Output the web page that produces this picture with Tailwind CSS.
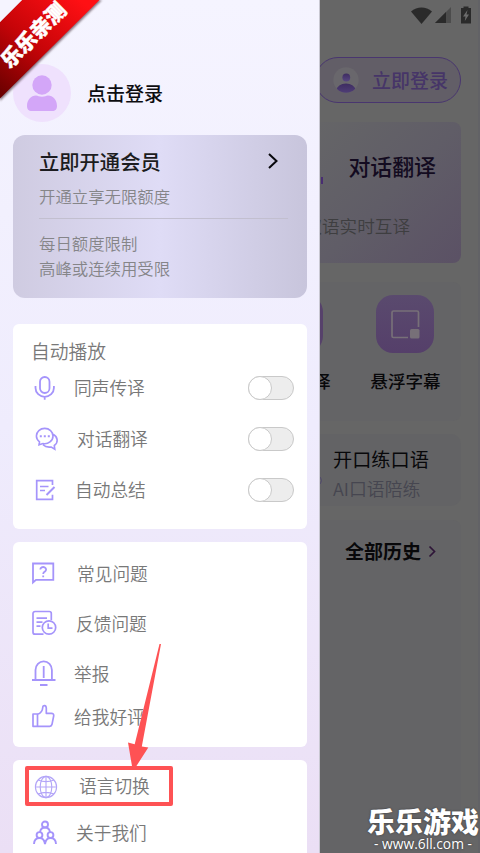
<!DOCTYPE html>
<html lang="zh-CN">
<head>
<meta charset="utf-8">
<title>设置</title>
<script src="https://cdn.jsdelivr.net/npm/@tailwindcss/browser@4"></script>
</head>
<body class="font-['Noto_Sans_CJK_SC',sans-serif]">
<div class="relative flex h-[853px] w-[480px] overflow-hidden bg-[#666666] whitespace-nowrap">

  <!-- drawer -->
  <aside class="flex w-[320px] shrink-0 flex-col border-r border-[#c9c8d2] bg-linear-to-b from-[#f5f4ff] via-[#efecfd] to-[#ebdff5] px-[13px]">
    <div class="flex h-[135px] shrink-0 items-center pt-[51px]">
      <div class="flex size-[58px] items-center justify-center rounded-full bg-[#efe1fd]">
        <svg class="h-[38px] w-[32px]" viewBox="0 0 32 38" fill="#d3a6f8"><circle cx="16" cy="11" r="9.7"/><path d="M1 32c0-6 4-10.500 9-10.500 2 0 3 1.300 6 1.300s4-1.300 6-1.300c5 0 9 4.500 9 10.500 0 3-1.500 5-5 5H6c-3.500 0-5-2-5-5z"/></svg>
      </div>
      <span class="ml-[16px] text-[19px] font-medium text-[#0c0c10]">点击登录</span>
    </div>

    <section class="h-[163px] w-[294px] shrink-0 rounded-[12px] bg-linear-to-r from-[#cfcbe1] via-[#dfdcf6] to-[#c8c5dc] pt-[11px] pr-[19px] pl-[26px]">
      <div class="flex h-[30px] items-center justify-between">
        <span class="text-[20.300px] font-medium text-[#1c1c20]">立即开通会员</span>
        <svg class="mr-[9px] h-[18px] w-[12px]" viewBox="0 0 12 18" fill="none" stroke="#08080c" stroke-width="2"><path d="M2 2l7.500 7L2 16"/></svg>
      </div>
      <p class="mt-[7px] h-[26px] text-[16.400px] leading-[26px] font-[350] text-[#858588]">开通立享无限额度</p>
      <div class="mt-[9px] h-px bg-[#c2bfcf]"></div>
      <p class="mt-[12px] text-[16.400px] leading-[24.500px] font-[350] text-[#858588]">每日额度限制<br>高峰或连续用受限</p>
    </section>

    <section class="mt-[26px] h-[205px] w-[294px] shrink-0 rounded-[6px] bg-white pt-[13px] pr-[13px] pl-[18px] text-[17.700px] font-[350] text-[#787878]">
      <h2 class="h-[25px] text-[18.800px] leading-[27px]">自动播放</h2>
      <div class="flex h-[51px] items-center">
        <svg class="ml-[3px] h-[26px] w-[22px]" viewBox="0 0 22 26" fill="none" stroke="#a594fb" stroke-width="1.800"><rect x="6" y="2" width="9.500" height="16" rx="4.750"/><path d="M1.500 11v2a9.200 8.800 0 0 0 18.400 0v-2M10.700 22v2.700"/></svg>
        <span class="ml-[18px] flex-1">同声传译</span>
        <span class="flex h-[24px] w-[46px] rounded-full border-[1.500px] border-[#c9c9c9] bg-[#ededed]"><i class="-mt-px -ml-px size-[24px] rounded-full border border-[#c9c9c9] bg-white"></i></span>
      </div>
      <div class="flex h-[51px] items-center">
        <svg class="ml-[4px] h-[24px] w-[24px]" viewBox="0 0 24 24" fill="none" stroke="#a594fb" stroke-width="1.600"><path d="M4 17.800l.5-3A8 7.500 0 0 1 1.400 9 8.300 7.600 0 0 1 18 9a8.300 7.600 0 0 1-10 7.500zM18.500 7.500c4.500 2.500 5 8 .8 11l.5 3.700-3.600-2.200c-3.500.5-6.500-.5-8.200-2.200"/><path d="M4.800 9.200h2M8.800 9.200h2M12.800 9.200h2" stroke-width="2"/></svg>
        <span class="ml-[18px] flex-1">对话翻译</span>
        <span class="flex h-[24px] w-[46px] rounded-full border-[1.500px] border-[#c9c9c9] bg-[#ededed]"><i class="-mt-px -ml-px size-[24px] rounded-full border border-[#c9c9c9] bg-white"></i></span>
      </div>
      <div class="flex h-[51px] items-center">
        <svg class="ml-[4px] h-[22px] w-[22px]" viewBox="0 0 22 22" fill="none" stroke="#a594fb" stroke-width="1.700"><path d="M17.500 6V1.700H1.700v18.600h15.800v-4.500M5 7.500h8.500M5 11.500h5"/><path d="M11.500 16l8-8" stroke-width="2"/></svg>
        <span class="ml-[18px] flex-1">自动总结</span>
        <span class="flex h-[24px] w-[46px] rounded-full border-[1.500px] border-[#c9c9c9] bg-[#ededed]"><i class="-mt-px -ml-px size-[24px] rounded-full border border-[#c9c9c9] bg-white"></i></span>
      </div>
    </section>

    <section class="mt-[13px] h-[205px] w-[294px] shrink-0 rounded-[6px] bg-white pt-[6px] pl-[18px] text-[17.700px] font-[350] text-[#787878]">
      <div class="flex h-[50px] items-center">
        <svg class="h-[24px] w-[24px]" viewBox="0 0 24 24" fill="none" stroke="#a594fb" stroke-width="1.800"><path d="M2 2.500h20.300v16.300H5L2 21.500z"/><path d="M9.300 8.500a2.900 2.500 0 1 1 4.500 2.100c-1 .7-1.600 1.200-1.600 2.400M12.200 14.500v1.700"/></svg>
        <span class="ml-[22px]">常见问题</span>
      </div>
      <div class="flex h-[50px] items-center">
        <svg class="h-[26px] w-[26px]" viewBox="0 0 26 26" fill="none" stroke="#a594fb" stroke-width="1.700"><path d="M20.300 10V3.500a2 2 0 0 0-2-2H4a2 2 0 0 0-2 2v18.700a2 2 0 0 0 2 2h8.500M5.500 8.200h10.500M5.500 12.200h6M5.500 16.200h4"/><circle cx="18" cy="17.500" r="6.700"/><path d="M17.200 13.500v4.600h4.300"/></svg>
        <span class="ml-[19px]">反馈问题</span>
      </div>
      <div class="flex h-[50px] items-center">
        <svg class="h-[26px] w-[25px]" viewBox="0 0 25 26" fill="none" stroke="#a594fb" stroke-width="1.800"><path d="M4.500 20v-10a8.200 8.700 0 0 1 16.400 0v10M1 20h23.500M12.700 6v12M9 25h7.500"/></svg>
        <span class="ml-[18px]">举报</span>
      </div>
      <div class="flex h-[36px] items-center">
        <svg class="h-[24px] w-[24px]" viewBox="0 0 24 24" fill="none" stroke="#a594fb" stroke-width="1.700" stroke-linejoin="round"><path d="M2 10h4.500v12.300H2zM6.500 10.300c3.500-1 5-3.300 5.300-7 .1-2.500 3.500-2.500 3.500 1V9.300h5.200c1.500 0 2.500 1 2.200 2.500l-1.700 8.500c-.3 1.300-1 2-2.300 2H6.500"/></svg>
        <span class="ml-[19px]">给我好评</span>
      </div>
    </section>

    <section class="mt-[13px] h-[93px] w-[294px] shrink-0 rounded-t-[6px] bg-white pt-[2px] pl-[18px] text-[17.700px] font-[350] text-[#787878]">
      <div class="flex h-[47px] items-center">
        <svg class="mt-[2px] ml-[3px] h-[24px] w-[24px]" viewBox="0 0 24 24" fill="none" stroke="#b3a5f8" stroke-width="1.100"><circle cx="12" cy="12" r="10.600"/><ellipse cx="12" cy="12" rx="5.800" ry="10.600"/><path d="M12 1v22M1 12h22M4 5c5 2 11 2 16 0M4 19c5-2 11-2 16 0"/></svg>
        <span class="ml-[21px]">语言切换</span>
      </div>
      <div class="flex h-[46px] items-center">
        <svg class="ml-[2px] h-[25px] w-[24px]" viewBox="0 0 24 25" fill="none" stroke="#a594fb" stroke-width="1.900"><circle cx="12" cy="4.500" r="3"/><path d="M7 12c.5-2.700 2.500-4.500 5-4.500s4.500 1.800 5 4.500"/><circle cx="6.500" cy="15" r="2.900"/><circle cx="17.500" cy="15" r="2.900"/><path d="M1 24c.2-3.700 2.300-6 5.500-6s5 2.300 5.500 6c.5-3.700 2.300-6 5.500-6s5.300 2.300 5.500 6"/></svg>
        <span class="ml-[19px]">关于我们</span>
      </div>
    </section>
  </aside>

  <!-- dimmed page behind the drawer -->
  <main class="flex w-[160px] flex-col overflow-hidden border-r-2 border-[#626266]">
    <div class="flex h-[30px] shrink-0 items-center justify-end gap-[3px] pr-[6px]">
      <svg class="h-[17px] w-[21px]" viewBox="0 0 21 17" fill="#2a2a2a"><path d="M0 4.500C6-.8 15-.8 21 4.500L10.500 17z"/></svg>
      <svg class="h-[16px] w-[16px]" viewBox="0 0 16 16"><path d="M0 16L16 0v16z" fill="#4c4c4c"/><path d="M0 16L11 5v11z" fill="#2a2a2a"/></svg>
      <svg class="ml-[6px] h-[18px] w-[12px]" viewBox="0 0 12 18"><path d="M1 2h2.500V.5h5V2H11v15.500H1z" fill="#2a2a2a"/><path d="M7.500 4L3 10.500h2.500L4.800 15 9 8.500H6.500z" fill="#6c6c6c"/></svg>
    </div>
    <div class="mt-[27px] -ml-[5px] flex h-[46px] w-[146px] shrink-0 items-center rounded-full border border-[#49366f] bg-[#625e67]">
      <svg class="ml-[16px] h-[28px] w-[28px]" viewBox="0 0 28 28"><defs><linearGradient id="u" x1="0" y1="0" x2="0" y2="1"><stop offset="0" stop-color="#3e2c61"/><stop offset="1" stop-color="#574681"/></linearGradient><clipPath id="c"><circle cx="14" cy="14" r="12.700"/></clipPath></defs><circle cx="14" cy="14" r="12.700" fill="#69676c"/><circle cx="14.300" cy="11.500" r="3.900" fill="url(#u)"/><ellipse cx="14" cy="24.500" rx="9.500" ry="7" fill="url(#u)" clip-path="url(#c)"/></svg>
      <span class="ml-[12px] text-[19px] font-medium text-[#463568]">立即登录</span>
    </div>
    <div class="relative mt-[19px] flex h-[141px] w-[141px] shrink-0 flex-col items-end rounded-r-[8px] bg-linear-to-br from-[#656567] via-[#605d67] to-[#5b5165] pt-[29px]">
      <span class="absolute top-[55px] left-[1px] h-[7px] w-[2px] bg-[#482d72]"></span>
      <span class="mr-[25px] h-[30px] text-[21.900px] leading-[29px] font-medium text-[#130b20]">对话翻译</span>
      <span class="mt-[30px] mr-[51px] h-[30px] text-[17.600px] leading-[30px] font-[350] text-[#3e3e40]">双语实时互译</span>
    </div>
    <div class="mt-[19px] flex h-[139px] w-[141px] shrink-0 justify-end rounded-r-[8px] bg-[#646466] pt-[13px] pr-[20px]">
      <div class="mr-[39px] flex w-[71px] shrink-0 flex-col items-center">
        <div class="mr-[4px] size-[58px] rounded-[17px] bg-[#56416b]"></div>
        <span class="mt-[14px] text-[17.600px] leading-[28px] font-medium text-[#08080a]">同声传译</span>
      </div>
      <div class="flex w-[71px] shrink-0 flex-col items-center">
        <div class="mr-px flex size-[58px] items-center justify-center rounded-[17px] bg-linear-to-b from-[#5a4a6e] to-[#553f6a]">
          <svg class="h-[30px] w-[30px]" viewBox="0 0 30 30" fill="none" stroke="#777078" stroke-width="1.700"><path d="M28.500 18V3.500a1.500 1.500 0 0 0-1.500-1.500H3.500A1.500 1.500 0 0 0 2 3.500V27a1.500 1.500 0 0 0 1.500 1.500H18"/><rect x="20" y="20" width="9.500" height="9.500" rx="1.500" fill="#777078" stroke="none"/></svg>
        </div>
        <span class="mt-[14px] text-[17.600px] leading-[28px] font-medium text-[#08080a]">悬浮字幕</span>
      </div>
    </div>
    <div class="relative mt-[13px] flex h-[72px] w-[141px] shrink-0 flex-col rounded-r-[10px] bg-[#636365] pt-[11px] pl-[13px]">
      <span class="absolute top-[42px] -left-[8px] h-[9px] w-[10px] rounded-full border border-[#50486d]"></span>
      <span class="h-[28px] text-[19.200px] leading-[28px] text-[#08080a]">开口练口语</span>
      <span class="mt-px h-[28px] text-[17.900px] leading-[28px] font-[350] text-[#464650]">AI口语陪练</span>
    </div>
    <div class="mt-[14px] flex h-[334px] w-[141px] shrink-0 rounded-tr-[8px] bg-[#646466] pt-[16px] pl-[25px]">
      <span class="text-[19px] leading-[30px] font-bold text-[#08080a]">全部历史</span>
      <svg class="mt-[9px] ml-[7px] h-[13px] w-[8px]" viewBox="0 0 8 13" fill="none" stroke="#2e1538" stroke-width="1.700"><path d="M1.500 1.500l5 5-5 5"/></svg>
    </div>
  </main>

  <!-- corner ribbon -->
  <svg class="absolute top-0 left-0 h-[110px] w-[110px]" viewBox="0 0 110 110">
    <defs><linearGradient id="r" x1="0" y1="1" x2=".8" y2="0"><stop offset="0" stop-color="#650000"/><stop offset=".5" stop-color="#c60408"/><stop offset="1" stop-color="#ff1014"/></linearGradient>
    <filter id="s"><feGaussianBlur stdDeviation="1.200"/></filter></defs>
    <path d="M22 0h80L0 101V22z" fill="#55404c" opacity=".7" filter="url(#s)"/>
    <path d="M22 0h77.500L0 98.500V22z" fill="url(#r)"/>
    <path d="M0 0h22L0 22z" fill="#f5f4ff"/>
    <text x="32.500" y="34" transform="rotate(-45 32.500 34)" text-anchor="middle" dominant-baseline="central" font-size="20.500" font-weight="900" fill="#fff" stroke="#fff" stroke-width=".5">乐乐亲测</text>
  </svg>

  <!-- callout box and arrow -->
  <div class="absolute top-[766px] left-[25px] h-[40px] w-[148px] rounded-[2px] border-4 border-[#fe5254]"></div>
  <svg class="absolute top-[640px] left-[120px] h-[132px] w-[45px]" viewBox="0 0 45 132" fill="#fe5254"><path d="M39.500 4h1.500L21.800 106.500l6.500 1L14.500 129H12.500L8 102.500l6.700 1.800z"/></svg>

  <!-- site mark -->
  <div class="absolute top-[804px] left-[367px] flex flex-col items-center text-white">
    <span class="h-[32px] text-[28px] leading-[34px] font-black [text-shadow:0_0_2px_#333]">乐乐游戏</span>
    <span class="font-['Open_Sans',sans-serif] text-[13.800px] leading-[15px] [text-shadow:0_0_2px_#333]">- www.6ll.com -</span>
  </div>
</div>
</body>
</html>
